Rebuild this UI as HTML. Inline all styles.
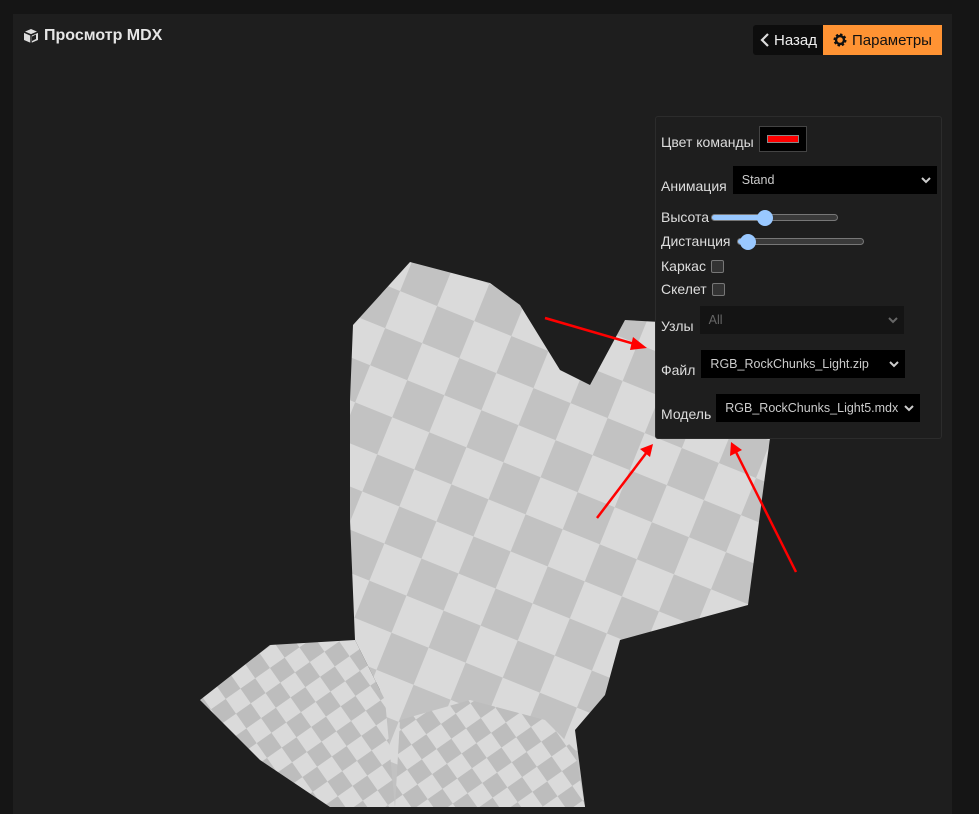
<!DOCTYPE html>
<html><head><meta charset="utf-8"><style>
*{box-sizing:border-box;margin:0;padding:0}
body{width:979px;height:807px;background:#151515;font-family:"Liberation Sans",Arial,sans-serif;overflow:hidden;position:relative;color:#ddd}
.panel{position:absolute;left:13px;top:14px;width:939px;height:800px;background:#1e1e1e}
.title{position:absolute;left:23px;top:27px;font-weight:bold;font-size:16px;color:#e6e6e6;display:flex;align-items:center;gap:5px}
.btns{position:absolute;left:753px;top:25px;display:flex;height:30px}
.b1{background:#0d0d0d;color:#eee;font-size:15px;padding:0 6px 0 7px;display:flex;align-items:center;gap:4px;border-radius:3px 0 0 3px}
.b2{background:#ff9333;color:#111;font-size:15px;padding:0 10px;display:flex;align-items:center;gap:5px}
.set{position:absolute;left:655px;top:116px;width:287px;height:323px;background:#1e1e1e;border:1px solid #2c2c2c;border-radius:3px;font-size:14px;color:#ddd}
.row{position:absolute;left:5px;display:flex;align-items:center}
.sel{background:#000;color:#ccc;font-size:12.5px;display:flex;align-items:center;justify-content:space-between;padding:0 6px 0 9px;height:28px}
.chk{width:13px;height:13px;border:1px solid #777;border-radius:2px;background:#333;margin-left:5px}
.track{height:7px;border:1px solid #777;border-radius:4px;background:#3a3a3a;position:relative}
.thumb{position:absolute;top:-5px;width:16px;height:16px;border-radius:50%;background:#99c8ff}
</style></head><body>
<div class="panel"></div>
<svg style="position:absolute;left:0;top:0" width="979" height="807">
<defs>
<pattern id="ck" width="80" height="80" patternUnits="userSpaceOnUse" patternTransform="rotate(22)">
<rect width="80" height="80" fill="#dadada"/><rect width="40" height="40" fill="#c2c2c2"/><rect x="40" y="40" width="40" height="40" fill="#c2c2c2"/>
</pattern>
<pattern id="ck2" width="36" height="36" patternUnits="userSpaceOnUse" patternTransform="rotate(-35)">
<rect width="36" height="36" fill="#dadada"/><rect width="18" height="18" fill="#bdbdbd"/><rect x="18" y="18" width="18" height="18" fill="#bdbdbd"/>
</pattern>
</defs>
<polygon fill="url(#ck)" points="353,325 410,262 490,283 520,305 560,370 590,385 625,320 660,322 770,438 748,605 620,640 605,695 575,730 585,807 390,807 380,690 355,640 350,520 350,400"/>
<polygon fill="url(#ck2)" points="200,700 270,645 355,640 385,700 395,807 330,807 260,760"/>
<polygon fill="url(#ck2)" points="400,720 470,700 545,720 575,750 585,807 395,807"/>
<polygon fill="url(#ck)" points="455,510 500,490 580,500 585,690 520,700 465,680" opacity=".9"/>
<g stroke="#f00" stroke-width="2.5" fill="#f00">
<line x1="545" y1="318" x2="638" y2="345"/><polygon points="647,348 633,337 630,350" stroke="none"/>
<line x1="597" y1="518" x2="647" y2="452"/><polygon points="653,444 640,449 650,457" stroke="none"/>
<line x1="796" y1="572" x2="736" y2="452"/><polygon points="731,442 730,456 742,450" stroke="none"/>
</g>
</svg>
<div class="title"><svg width="16" height="16" viewBox="0 0 16 16"><path d="M8 1 L15 4 V12 L8 15 L1 12 V4Z" fill="#ddd"/><path d="M8 7 L15 4 M8 7 L1 4 M8 7 V15" stroke="#1e1e1e" stroke-width="1.5" fill="none"/><path d="M9 8.5 L13 6.5 V11 L9 13Z" fill="#1e1e1e"/></svg>Просмотр MDX</div>
<div class="btns"><div class="b1"><svg width="10" height="14" viewBox="0 0 10 14"><path d="M8 1 L2 7 L8 13" stroke="#ddd" stroke-width="2.2" fill="none"/></svg>Назад</div><div class="b2"><svg width="14" height="14" viewBox="0 0 14 14"><circle cx="7" cy="7" r="5" fill="none" stroke="#111" stroke-width="3" stroke-dasharray="2.2 1.7"/><circle cx="7" cy="7" r="4" fill="none" stroke="#111" stroke-width="2.4"/></svg>Параметры</div></div>
<div class="set">
<div class="row" style="top:7px;height:30px"><span style="margin-top:6px">Цвет команды</span><div style="margin-left:5px;width:48px;height:26px;background:#000;border:1px solid #444;display:flex;align-items:center;justify-content:center"><div style="width:32px;height:8px;background:#f00;border:1px solid #888"></div></div></div>
<div class="row" style="top:47px;align-items:flex-end;height:30px">Анимация<div class="sel" style="margin-left:6px;width:204px">Stand<svg width="10" height="7" viewBox="0 0 10 7"><path d="M1 1 L5 5 L9 1" stroke="#ccc" stroke-width="2" fill="none"/></svg></div></div>
<div class="row" style="top:92px">Высота<div class="track" style="margin-left:2px;width:127px;background:linear-gradient(90deg,#99c8ff 40%,#3a3a3a 40%)"><div class="thumb" style="left:45px"></div></div></div>
<div class="row" style="top:116px">Дистанция<div class="track" style="margin-left:6px;width:127px;background:linear-gradient(90deg,#99c8ff 8%,#3a3a3a 8%)"><div class="thumb" style="left:2px"></div></div></div>
<div class="row" style="top:141px">Каркас<div class="chk"></div></div>
<div class="row" style="top:164px">Скелет<div class="chk"></div></div>
<div class="row" style="top:187px;align-items:flex-end;height:30px">Узлы<div class="sel" style="margin-left:6px;width:204px;background:#141414;color:#666">All<svg width="10" height="7" viewBox="0 0 10 7"><path d="M1 1 L5 5 L9 1" stroke="#666" stroke-width="2" fill="none"/></svg></div></div>
<div class="row" style="top:231px;align-items:flex-end;height:30px">Файл<div class="sel" style="margin-left:6px;width:204px">RGB_RockChunks_Light.zip<svg width="10" height="7" viewBox="0 0 10 7"><path d="M1 1 L5 5 L9 1" stroke="#ccc" stroke-width="2" fill="none"/></svg></div></div>
<div class="row" style="top:275px;align-items:flex-end;height:30px">Модель<div class="sel" style="margin-left:5px;width:204px">RGB_RockChunks_Light5.mdx<svg width="10" height="7" viewBox="0 0 10 7"><path d="M1 1 L5 5 L9 1" stroke="#ccc" stroke-width="2" fill="none"/></svg></div></div>
</div>
</body></html>
